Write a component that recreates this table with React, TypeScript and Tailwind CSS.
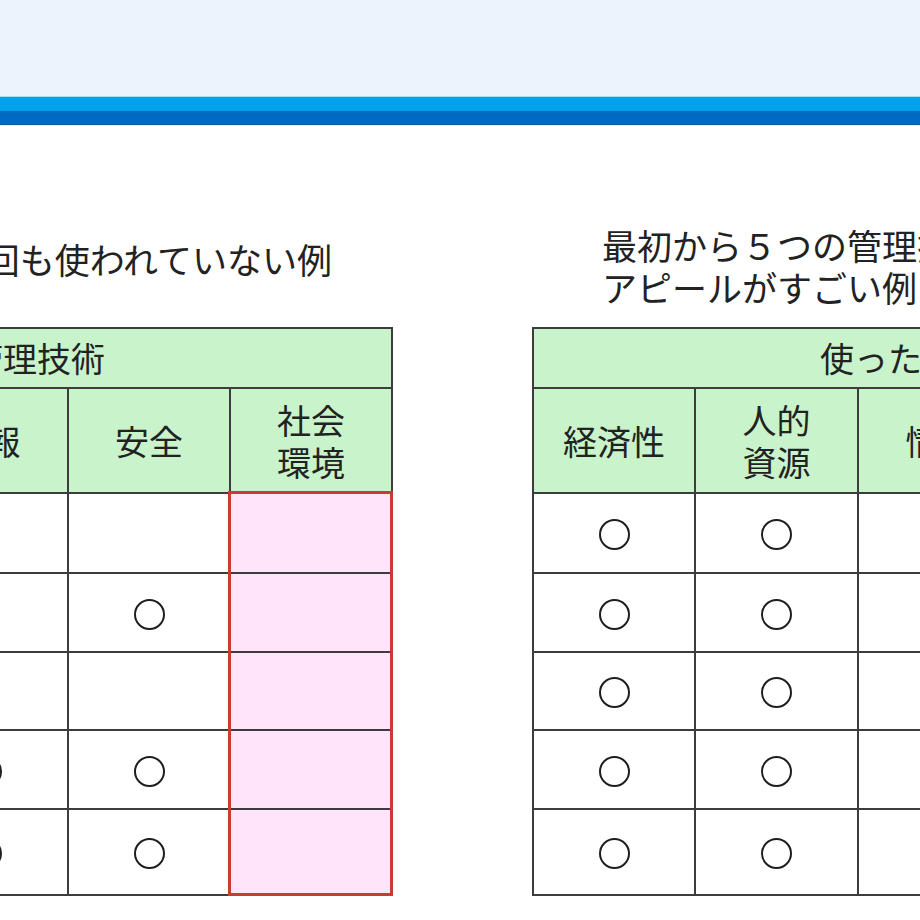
import React from "react";

const COLS = ["経済性", "人的\n資源", "情報", "安全", "社会\n環境"];
const COL_W = ["w-[160px]", "w-[163px]", "w-[163px]", "w-[162px]", "w-[162px]"];
const ROW_H = ["h-[80px]", "h-[79px]", "h-[78px]", "h-[79px]", "h-[86px]"];

const LEFT_MARKS = [
  [true, true, false, false, false],
  [true, false, false, true, false],
  [true, true, false, false, false],
  [true, false, true, true, false],
  [false, true, true, true, false],
];

const RIGHT_MARKS = [
  [true, true, true, true, true],
  [true, true, true, true, true],
  [true, true, true, true, true],
  [true, true, true, true, true],
  [true, true, true, true, true],
];

function Mark() {
  return <div className="mt-[3px] h-[31px] w-[31px] rounded-full border-2 border-[#1e1e1e]" />;
}

function SkillTable({ marks, highlight }: { marks: boolean[][]; highlight?: number }) {
  return (
    <div className="relative w-[814px] border-2 border-[#3c3c3c] text-[#222]">
      <div className="flex h-[58px] items-center justify-center bg-[#c9f3cb] text-[34px] leading-none">
        使った管理技術
      </div>
      <div className="flex h-[105px] border-t-2 border-[#3c3c3c] bg-[#c9f3cb]">
        {COLS.map((c, i) => (
          <div
            key={c}
            className={`${COL_W[i]} flex items-center justify-center whitespace-pre text-center text-[34px] leading-[42px] ${
              i > 0 ? "border-l-2 border-[#3c3c3c]" : ""
            }`}
          >
            {c}
          </div>
        ))}
      </div>
      {marks.map((row, r) => (
        <div key={r} className={`flex ${ROW_H[r]} border-t-2 border-[#3c3c3c]`}>
          {row.map((on, i) => (
            <div
              key={i}
              className={`${COL_W[i]} flex items-center justify-center ${
                i > 0 ? "border-l-2 border-[#3c3c3c]" : ""
              } ${highlight === i ? "bg-[#ffe4fa]" : "bg-white"}`}
            >
              {on && highlight !== i && <Mark />}
            </div>
          ))}
        </div>
      ))}
      {highlight !== undefined && (
        <div className="absolute bottom-[-2px] right-[-2px] top-[162px] w-[165px] border-[3px] border-[#cc3a34]" />
      )}
    </div>
  );
}

export default function App() {
  return (
    <div className="h-[920px] w-[920px] overflow-hidden bg-white font-['Noto_Sans_CJK_JP','Noto_Sans',sans-serif] text-[#222]">
      <div className="h-[96px] bg-[#ebf4fd]" />
      <div className="h-px bg-[#a8def2]" />
      <div className="h-px bg-[#1a97d6]" />
      <div className="h-[13px] bg-[#00a2ee]" />
      <div className="h-[13px] bg-[#0069c1]" />
      <div className="h-px bg-[#0c5b9e]" />
      <div className="h-px bg-[#d8f3fb]" />

      <div className="flex">
        <div className="ml-[-421px] w-[814px] shrink-0">
          <div className="mt-[112px] whitespace-nowrap pr-[61px] text-right text-[35px] leading-[42px]">
            社会環境の管理技術が一回も使われていない例
          </div>
          <div className="mt-[47px]">
            <SkillTable marks={LEFT_MARKS} highlight={4} />
          </div>
        </div>

        <div className="ml-[139px] w-[814px] shrink-0">
          <div className="ml-[70px] mt-[98px] whitespace-nowrap text-[35px] leading-[42px]">
            <div>最初から５つの管理技術を使っていて</div>
            <div>アピールがすごい例</div>
          </div>
          <div className="mt-[19px]">
            <SkillTable marks={RIGHT_MARKS} />
          </div>
        </div>
      </div>
    </div>
  );
}
